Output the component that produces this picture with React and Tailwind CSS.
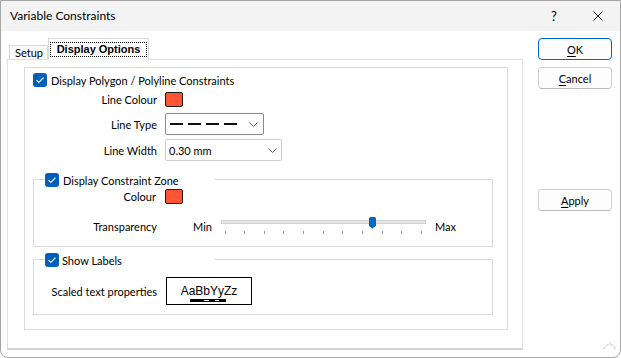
import React from "react";

const Check = () => (
  <div className="w-[14px] h-[14px] rounded-[3px] bg-[#005fb8] flex items-center justify-center shrink-0">
    <svg width="10" height="8" viewBox="0 0 10 8">
      <path d="M1.5 4.2 L3.8 6.4 L8.5 1.6" fill="none" stroke="white" strokeWidth="1.1" />
    </svg>
  </div>
);

const Chevron = () => (
  <svg width="9" height="5" viewBox="0 0 9 5" className="shrink-0">
    <path d="M0.5 0.5 L4.5 4.5 L8.5 0.5" stroke="#606060" fill="none" strokeWidth="1" />
  </svg>
);

const Swatch = () => (
  <div className="w-[18px] h-[15px] rounded-[2px] border border-[#1a1a1a] bg-[#ff5533]" />
);

const Slider = () => {
  const ticks = Array.from({ length: 11 }, (_, i) => 5.5 + i * 19.64);
  return (
    <svg width="212" height="20" viewBox="0 0 212 20" className="shrink-0">
      <rect x="2.5" y="4.5" width="204" height="3" fill="#e6e6e6" stroke="#d2d2d2" />
      {ticks.map((x, i) => (
        <line key={i} x1={Math.round(x) + 0.5} y1="15" x2={Math.round(x) + 0.5} y2="18" stroke="#9a9a9a" />
      ))}
      <path d="M150 2.5 Q150 1 151.5 1 L155.5 1 Q157 1 157 2.5 L157 10 L153.5 12.5 L150 10 Z" fill="#0067c0" />
    </svg>
  );
};

const Btn = ({ u, rest, primary, className = "" }) => (
  <div
    className={
      "w-[74px] h-[22px] rounded-[4px] bg-[#fdfdfd] flex items-center justify-center " +
      (primary ? "border border-[#0067c0] " : "border border-[#d0d0d0] border-b-[#bcbcbc] ") +
      className
    }
  >
    <span>
      <span className="underline underline-offset-2">{u}</span>
      {rest}
    </span>
  </div>
);

export default function App() {
  return (
    <div className="w-[621px] h-[358px] bg-white border border-[#a6a6a6] rounded-b-[8px] overflow-hidden relative font-['Lato','Noto_Sans',sans-serif] text-[11px] text-black leading-none">
      {/* Title bar */}
      <div className="h-[30px] bg-[#f3f3f3] flex items-center pl-[9px] text-[12px]">
        <span className="flex-1">Variable Constraints</span>
        <span className="w-[44px] text-center text-[13px]">?</span>
        <span className="w-[44px] flex items-center justify-center">
          <svg width="10" height="10" viewBox="0 0 10 10">
            <path d="M0.5 0.5 L9.5 9.5 M9.5 0.5 L0.5 9.5" stroke="#1a1a1a" strokeWidth="1" />
          </svg>
        </span>
      </div>

      {/* Body */}
      <div className="flex">
        {/* Left: tabs + panel */}
        <div className="pl-[6px] pt-[7px]">
          <div className="flex items-end h-[21px] pl-[2px]">
            <div className="w-[39px] h-[14px] border border-b-0 border-[#d9d9d9] bg-[#fafafa] flex items-center pl-[5px] leading-[14px]">
              Setup
            </div>
            <div className="relative z-10 w-[101px] h-[22px] -mb-px border border-b-0 border-[#d9d9d9] bg-white pl-[1px] pt-[3px]">
              <div className="w-[97px] h-[15px] border border-dotted border-black flex items-center justify-center font-['Liberation_Sans',sans-serif] font-bold text-[11px]">
                Display Options
              </div>
            </div>
          </div>
          <div className="w-[516px] h-[291px] border border-[#e0e0e0] border-b-2 border-b-[#d4d4d4] pl-[16px] pt-[7px]">
            <div className="w-[484px] h-[263px] border border-[#dadada] flex flex-col">
              {/* Row 1 */}
              <div className="mt-[4px] h-[16px] pl-[8px] flex items-center gap-[4px]">
                <Check />
                <span>Display Polygon / Polyline Constraints</span>
              </div>
              {/* Line Colour */}
              <div className="mt-[4px] h-[15px] flex items-center">
                <span className="w-[132px] text-right">Line Colour</span>
                <div className="ml-[8px]">
                  <Swatch />
                </div>
              </div>
              {/* Line Type */}
              <div className="mt-[6px] h-[22px] flex items-center">
                <span className="w-[132px] text-right">Line Type</span>
                <div className="ml-[8px] w-[99px] h-[22px] rounded-[2px] border border-[#8a8a8a] flex items-center pl-[4px] pr-[5px]">
                  <svg width="68" height="4" viewBox="0 0 68 4" className="shrink-0">
                    <path d="M0 2 H13 M18 2 H31 M36 2 H49 M54 2 H67" stroke="#111" strokeWidth="2" />
                  </svg>
                  <div className="flex-1" />
                  <Chevron />
                </div>
              </div>
              {/* Line Width */}
              <div className="mt-[4px] h-[22px] flex items-center">
                <span className="w-[132px] text-right">Line Width</span>
                <div className="ml-[8px] w-[117px] h-[22px] rounded-[2px] border border-[#cccccc] flex items-center pl-[3px] pr-[4px]">
                  <span className="flex-1">0.30 mm</span>
                  <Chevron />
                </div>
              </div>

              {/* Constraint Zone group */}
              <div className="mt-[18px] ml-[8px] w-[460px] h-[68px] relative border border-[#dadada] pt-[9px]">
                <div className="absolute top-[-7px] left-[11px] h-[14px] w-[170px] bg-white flex items-center gap-[4px]">
                  <Check />
                  <span>Display Constraint Zone</span>
                </div>
                <div className="h-[15px] flex items-center">
                  <span className="w-[122px] text-right">Colour</span>
                  <div className="ml-[9px]">
                    <Swatch />
                  </div>
                </div>
                <div className="mt-[12px] h-[20px] flex items-center">
                  <span className="w-[123px] text-right">Transparency</span>
                  <span className="ml-[36px] w-[26px]">Min</span>
                  <Slider />
                  <span className="ml-[4px]">Max</span>
                </div>
              </div>

              {/* Show Labels group */}
              <div className="mt-[12px] ml-[8px] w-[460px] h-[56px] relative border border-[#dadada] pt-[17px]">
                <div className="absolute top-[-7px] left-[11px] h-[14px] w-[170px] bg-white flex items-center gap-[3px]">
                  <Check />
                  <span>Show Labels</span>
                </div>
                <div className="h-[28px] flex items-center">
                  <span className="w-[123px] text-right">Scaled text properties</span>
                  <div className="ml-[9px] w-[86px] h-[28px] border border-black flex flex-col items-center pt-[6px]">
                    <span className="leading-[14px] font-['Liberation_Sans',sans-serif] text-[12px]">AaBbYyZz</span>
                    <svg width="36" height="3" viewBox="0 0 36 3" className="mt-[1px] ml-[-2px]">
                      <rect x="0" y="0" width="36" height="3" fill="#000" />
                      <rect x="14" y="1" width="5" height="1" fill="#fff" />
                      <rect x="25" y="1" width="4" height="1" fill="#fff" />
                    </svg>
                  </div>
                </div>
              </div>
            </div>
          </div>
        </div>

        {/* Right: buttons */}
        <div className="ml-[15px] pt-[7px] flex flex-col">
          <Btn u="O" rest="K" primary />
          <Btn u="C" rest="ancel" className="mt-[7px]" />
          <Btn u="A" rest="pply" className="mt-[100px]" />
        </div>
      </div>

      {/* size grip */}
      <svg width="13" height="8" viewBox="0 0 13 8" className="absolute right-[4px] bottom-[7px]">
        <path d="M0.5 7 L6.5 1 L12.5 7" fill="none" stroke="#8a8a8a" strokeWidth="1" strokeDasharray="1 1" />
      </svg>
    </div>
  );
}
